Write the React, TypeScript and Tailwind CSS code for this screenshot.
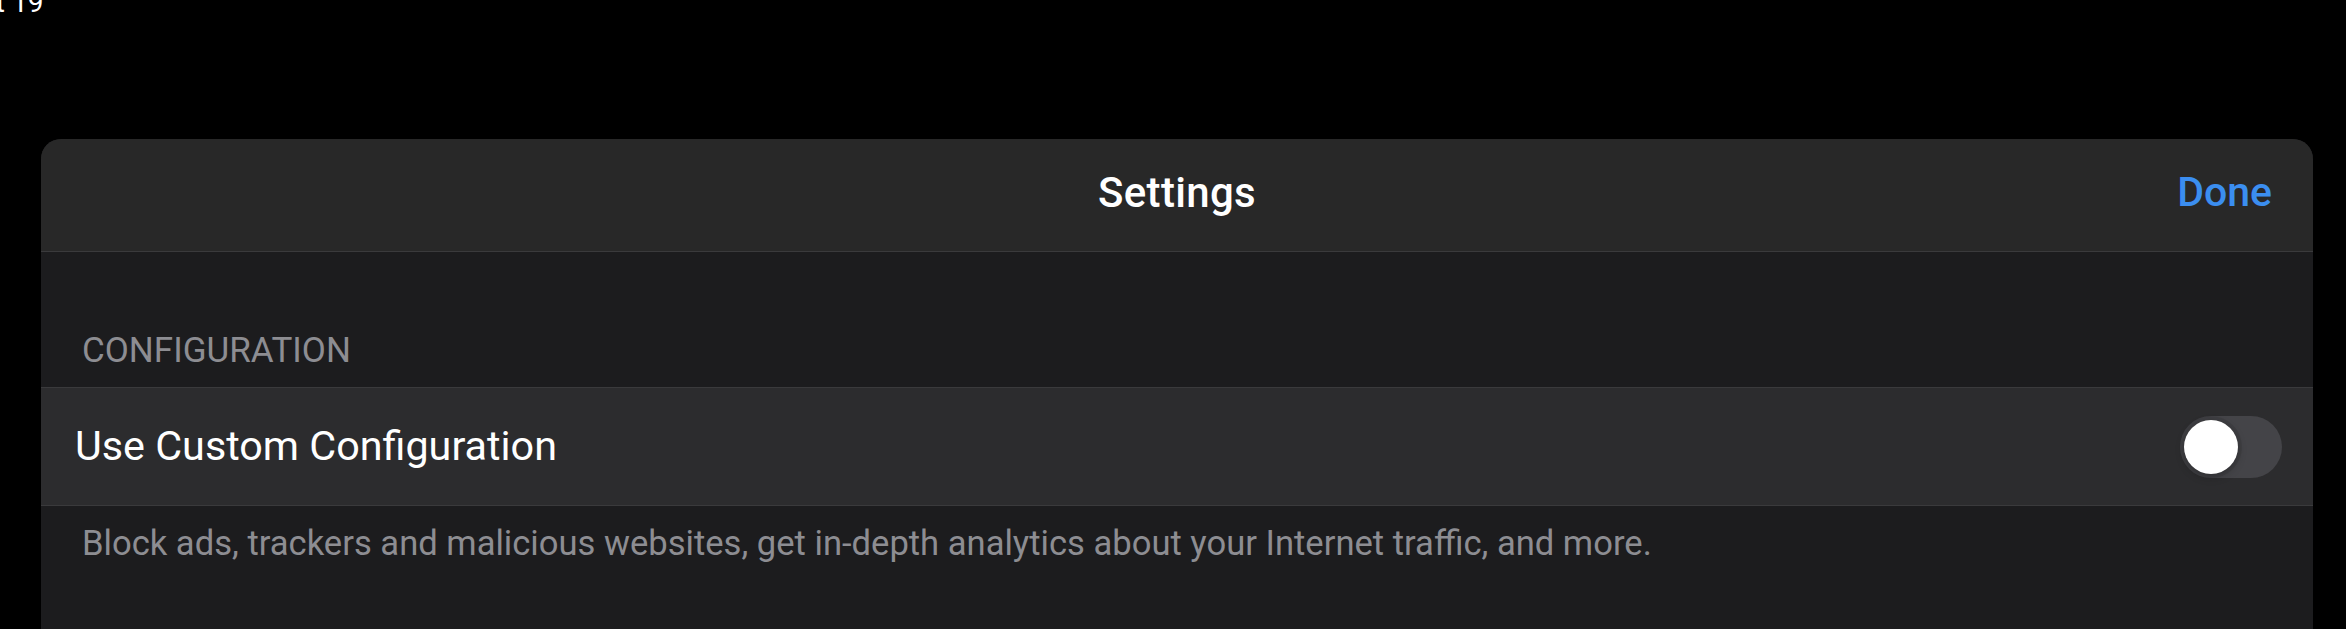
import { useState } from "react";

const Toggle = ({ on, onChange }: { on: boolean; onChange: () => void }) => {
  return (
    <button
      onClick={onChange}
      className={`flex h-[62px] w-[102px] items-center rounded-full p-[4px] ${on ? "justify-end bg-[#30d158]" : "justify-start bg-[#444448]"}`}
    >
      <span className="block h-[54px] w-[54px] rounded-full bg-white shadow-[0_0_0_4px_rgba(0,0,0,0.08),0_3px_8px_rgba(0,0,0,0.25)]" />
    </button>
  );
};

const App = () => {
  const [custom, setCustom] = useState(false);

  return (
    <div className="flex h-screen flex-col overflow-hidden bg-black font-['Roboto',_'Inter',_sans-serif]">
      {/* Status bar (cut off at the top) */}
      <div className="-mt-[11px] -ml-[36px] h-[28px] whitespace-nowrap text-[28px] leading-[28px] text-white">
        Sat 19
      </div>

      {/* Sheet */}
      <div className="mt-[122px] ml-[41px] flex w-[2272px] flex-1 flex-col rounded-t-[20px] bg-[#1c1c1e]">
        {/* Header */}
        <div className="flex h-[113px] shrink-0 items-center justify-between rounded-t-[20px] border-b border-[#3a3a3c] bg-[#282828] px-[41px] pb-[5px]">
          <div className="w-[97px]" />
          <h1 className="text-[42px] font-medium tracking-[0.3px] text-white">Settings</h1>
          <button className="w-[97px] text-right text-[41px] font-medium text-[#3b8ef0]">Done</button>
        </div>

        {/* Section header */}
        <div className="flex h-[135px] shrink-0 items-end px-[41px] pb-[10px]">
          <h2 className="text-[35px] font-normal uppercase text-[#8d8d92]">Configuration</h2>
        </div>

        {/* Row */}
        <div className="flex h-[119px] shrink-0 items-center justify-between border-y border-[#3a3a3c] bg-[#2c2c2e] pr-[31px] pl-[34px]">
          <span className="text-[41.3px] text-white">Use Custom Configuration</span>
          <Toggle on={custom} onChange={() => setCustom(!custom)} />
        </div>

        {/* Footer */}
        <p className="px-[41px] pt-[12px] text-[34.6px] text-[#8d8d92]">
          Block ads, trackers and malicious websites, get in-depth analytics about your Internet traffic, and more.
        </p>
      </div>
    </div>
  );
};

export default App;
